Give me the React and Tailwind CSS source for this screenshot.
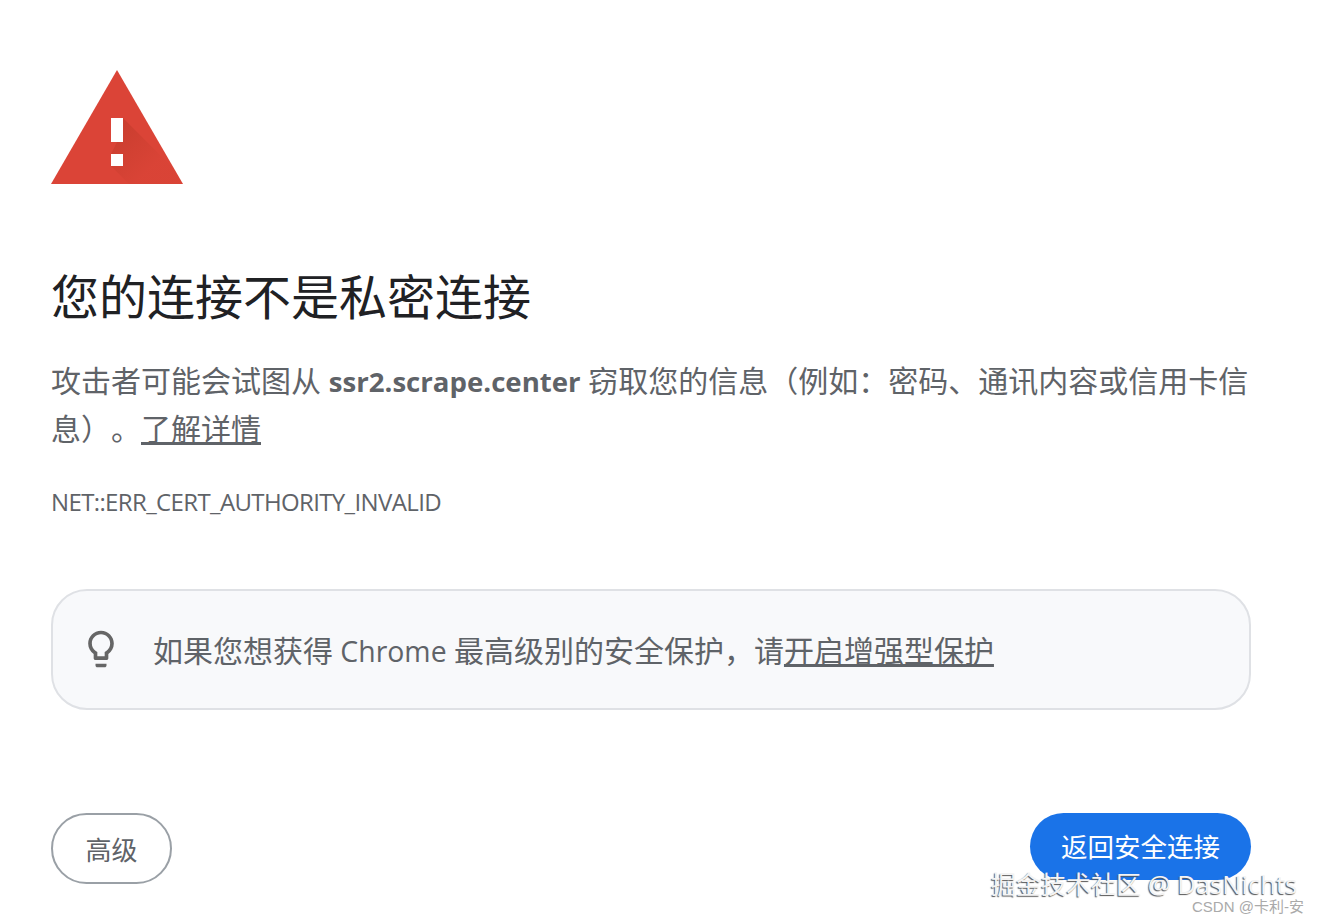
const cjk = "font-['Open_Sans','Noto_Sans_CJK_SC',sans-serif] [text-spacing-trim:space-all]";
function Warn() {
  return (
    <svg width="132" height="114" viewBox="0 0 132 114">
      <defs>
        <linearGradient id="g" x1="60" y1="48" x2="105" y2="93" gradientUnits="userSpaceOnUse">
          <stop offset="0" stopColor="#a8321f" stopOpacity="0.4" />
          <stop offset="1" stopColor="#a8321f" stopOpacity="0.03" />
        </linearGradient>
        <clipPath id="c"><path d="M66 0L132 114H0Z" /></clipPath>
      </defs>
      <path d="M66 0L132 114H0Z" fill="#db4437" />
      <path d="M72 48L138 114H78L60 96V84L66 72Z" fill="url(#g)" clipPath="url(#c)" />
      <rect x="60" y="48" width="12" height="24" fill="#fff" />
      <rect x="60" y="84" width="12" height="12" fill="#fff" />
    </svg>
  );
}
export default function App() {
  return (
    <div className={`w-[1320px] h-[924px] bg-white relative overflow-hidden ${cjk} pl-[51px] pr-[69px] pt-[70px] flex flex-col`}>
      <Warn />
      <h1 className="mt-[83px] text-[48px] leading-[60px] text-[#202124] font-normal h-[60px]">您的连接不是私密连接</h1>
      <p className="mt-[30px] text-[30px] leading-[48px] text-[#5f6368]">攻击者可能会试图从 <b className="text-[27.6px]">ssr2.scrape.center</b> 窃取您的信息（例如：密码、通讯内容或信用卡信息）。<u className="underline">了解详情</u></p>
      <div className="mt-[33px] text-[24px] leading-[32px] text-[#5f6368] h-[32px] tracking-[-0.63px]">NET::ERR_CERT_AUTHORITY_INVALID</div>
      <div className="mt-[71px] h-[121px] w-[1200px] rounded-[36px] border-2 border-[#dfe1e5] bg-[#f8f9fb] flex items-center pl-[26px] text-[30px] text-[#5f6368]">
        <svg className="-mt-[2px]" width="44" height="44" viewBox="0 0 24 24" fill="#666"><path d="M9 21c0 .55.45 1 1 1h4c.55 0 1-.45 1-1v-1H9v1zm3-19C8.14 2 5 5.14 5 9c0 2.38 1.19 4.47 3 5.74V17c0 .55.45 1 1 1h6c.55 0 1-.45 1-1v-2.26c1.81-1.27 3-3.36 3-5.74 0-3.86-3.14-7-7-7zm2.85 11.1l-.85.6V16h-4v-2.3l-.85-.6C7.8 12.16 7 10.63 7 9c0-2.76 2.24-5 5-5s5 2.24 5 5c0 1.63-.8 3.16-2.15 4.1z" /></svg>
        <span className="ml-[30px] pt-[2px]">如果您想获得<span className="text-[28.4px]"> Chrome </span>最高级别的安全保护，请<u>开启增强型保护</u></span>
      </div>
      <div className="mt-[103px] w-[1200px] flex justify-between items-start">
        <div className="w-[121px] h-[71px] rounded-full border-2 border-[#9aa0a6] flex items-center justify-center pt-[3px] text-[26px] text-[#5f6368]">高级</div>
        <div className="w-[221px] h-[67px] rounded-full bg-[#1a73e8] flex items-center justify-center pt-[3px] text-[26.5px] text-white">返回安全连接</div>
      </div>
      <div className="absolute left-[991px] top-[867px] text-[25px] leading-[34px] text-[#f4f4f4] [text-shadow:-1px_1px_1px_#555]">掘金技术社区<span className="text-[25.6px]"> @ DasNichts</span></div>
      <div className="absolute left-[1192px] top-[897px] text-[15px] leading-[20px] text-[#aaa] font-['Liberation_Sans','Noto_Sans_CJK_SC',sans-serif]">CSDN @卡利-安</div>
    </div>
  );
}
